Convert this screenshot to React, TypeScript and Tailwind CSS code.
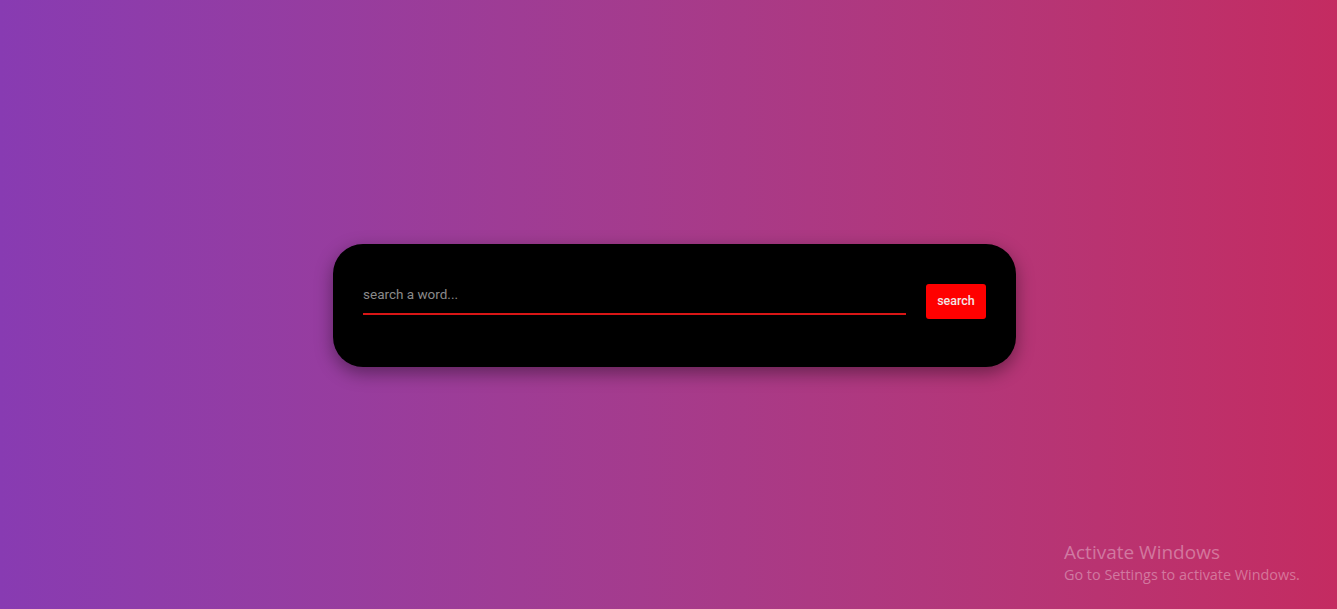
export default function App() {
  return (
    <div className="relative flex h-[609px] w-full items-center justify-center overflow-hidden bg-gradient-to-r from-[#883bb2] to-[#c42b61] pl-[12px] font-['Roboto',sans-serif]">
      {/* Search card */}
      <div className="mt-[2px] w-[683px] rounded-[30px] bg-black px-[30px] pb-[48px] pt-[40px] shadow-[0_6px_18px_rgba(0,0,0,0.4)]">
        <div className="flex items-start gap-[20px]">
          <div className="flex-1 border-b-2 border-[#d81616] pb-[9px]">
            <input
              type="text"
              placeholder="search a word..."
              className="block h-[20px] w-full bg-transparent p-0 text-[13.5px] text-[#999] outline-none placeholder:text-[#8a8a8a]"
            />
          </div>
          <button
            type="button"
            className="h-[35px] w-[60px] rounded-[3px] bg-[#ff0000] text-[12.5px] font-medium text-[#f3e6e6]"
          >
            search
          </button>
        </div>
      </div>

      {/* Windows watermark */}
      <div className="pointer-events-none absolute left-[1064px] top-[540px] font-['Open_Sans',sans-serif] text-white/35">
        <p className="text-[19px] leading-[24px]">Activate Windows</p>
        <p className="text-[14.4px] leading-[22px]">Go to Settings to activate Windows.</p>
      </div>
    </div>
  );
}
